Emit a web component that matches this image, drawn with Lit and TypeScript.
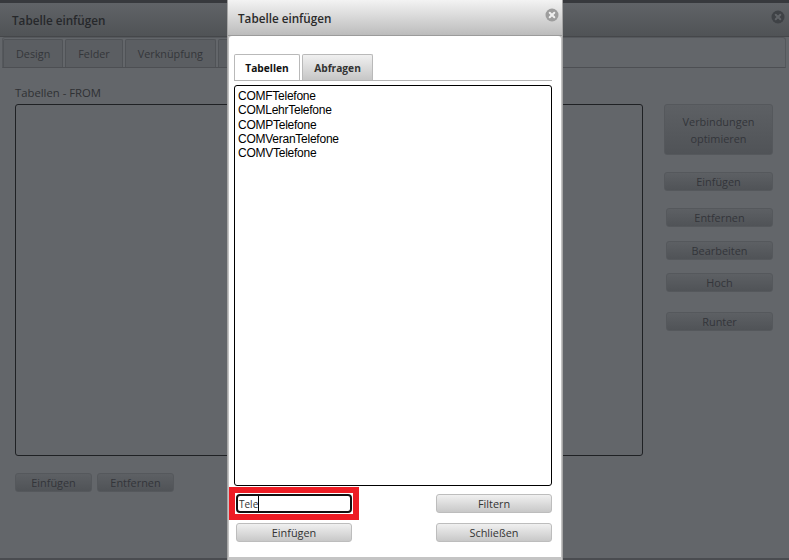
import { LitElement, html, css } from "lit";
import { customElement } from "lit/decorators.js";

const closeIcon = html`<svg class="x" width="14" height="14" viewBox="0 0 14 14"><circle cx="7" cy="7" r="6.5" fill="currentColor"/><path d="M4.7 4.7l4.6 4.6M9.3 4.7l-4.6 4.6" stroke="var(--x)" stroke-width="2" stroke-linecap="round"/></svg>`;

@customElement("app-root")
export class AppRoot extends LitElement {
  static styles = css`
    :host { display: block; width: 789px; height: 560px; position: relative; overflow: hidden; background: #63666a; font-family: "Open Sans", sans-serif; color: #2b2d30; }
    * { box-sizing: border-box; }
    .back { height: 560px; padding-top: 3px; background: #37393d; display: flex; flex-direction: column; }
    .back-head { height: 34px; flex: none; display: flex; align-items: flex-start; justify-content: space-between; padding: 9px 4px 0 12px; background: linear-gradient(#606367, #505356); border-bottom: 1px solid #45474a; font-size: 11.7px; font-weight: 600; color: #26282b; --x: #606367; }
    .back-head .x { color: #3f4246; margin-top: -2px; }
    .back-body { flex: 1; background: #63666a; padding: 0 2px; display: flex; flex-direction: column; border-bottom: 2px solid #4a4c50; }
    .back-tabs { height: 31px; flex: none; padding: 1px 0 0 0; display: flex; gap: 2px; border: 1px solid #55585c; border-radius: 3px 3px 0 0; border-bottom-color: #4d4f53; margin-right: 1px; }
    .back-tab { height: 28px; padding: 0 12px; display: flex; align-items: center; background: #5b5e62; border: 1px solid #505357; border-bottom: 0; border-radius: 2px 2px 0 0; font-size: 10.8px; color: #34363a; }
    .back-tab.rest { width: 40px; }
    .back-content { flex: 1; display: flex; padding: 17px 14px 0 13px; color: #2f3134; }
    .left { width: 628px; flex: none; }
    .from { font-size: 11.3px; line-height: 16px; height: 19px; }
    .frame { height: 352px; border: 1px solid #1f2124; border-radius: 3px; }
    .left-btns { display: flex; gap: 5px; margin-top: 17px; }
    .left-btns .dbtn { width: 77px; height: 19px; }
    .right { margin-left: 21px; width: 110px; padding-top: 19px; display: flex; flex-direction: column; align-items: stretch; }
    .dbtn { display: flex; align-items: center; justify-content: center; text-align: center; height: 19px; background: linear-gradient(#5d6064, #505357); border: 1px solid #55585c; border-radius: 3px; font-size: 10.9px; color: #33353a; }
    .dbtn.big { height: 51px; line-height: 17px; margin-bottom: 17px; }
    .dbtn.ein { margin-bottom: 17px; }
    .dbtn.s { margin-left: 2px; margin-bottom: 14px; }
    .dbtn.bear { margin-bottom: 13px; }
    .dbtn.hoch { margin-bottom: 20px; }
    .modal { position: absolute; left: 227px; top: 0; width: 336px; height: 560px; background: #c4c4c4; border-left: 1px solid #a6a6a6; border-right: 1px solid #a6a6a6; display: flex; flex-direction: column; padding-bottom: 3px; }
    .m-head { height: 36px; flex: none; display: flex; justify-content: space-between; padding: 10px 3px 0 10px; background: linear-gradient(#f3f3f3, #bcbcbc); border-bottom: 1px solid #9b9b9b; font-size: 11.7px; font-weight: 600; color: #2a2a2a; --x: #eee; }
    .m-head .x { color: #9d9d9d; margin-top: -2px; }
    .m-body { flex: 1; background: #fff; border-radius: 3px 3px 0 0; margin: 0 1px; padding: 18px 9px 0 5px; display: flex; flex-direction: column; }
    .tabs { height: 27px; flex: none; display: flex; gap: 2px; border-bottom: 1px solid #b5b5b5; }
    .tab { height: 26px; display: flex; align-items: center; justify-content: center; border: 1px solid #b9b9b9; border-bottom: 0; border-radius: 2px 2px 0 0; font-size: 10.2px; font-weight: 700; color: #111; }
    .tab.on { width: 66px; background: #fff; }
    .tab.off { width: 71px; background: linear-gradient(#f0f0f0, #c6c6c6); color: #333; }
    .list { height: 401px; margin-top: 4px; flex: none; border: 1px solid #000; border-radius: 3px; padding: 3px 3px; font: 12px/14.3px "Liberation Sans", Arial, sans-serif; letter-spacing: -0.25px; color: #000; background: #fff; }
    .row { display: flex; justify-content: space-between; align-items: center; padding: 0 0 0 2px; }
    .r1 { height: 19px; margin-top: 8px; }
    .r2 { height: 19px; margin-top: 10px; }
    .hl { position: absolute; left: 1px; top: 487px; width: 130px; height: 33px; border: 6px solid #ed1c24; }
    .input { height: 19px; width: 116px; border: 2px solid #111; border-radius: 4px; background: #fff; display: flex; align-items: center; font-size: 10px; color: #333; padding-left: 1px; }
    .caret { width: 1px; height: 15px; background: #000; }
    .btn { width: 116px; height: 19px; display: flex; align-items: center; justify-content: center; background: linear-gradient(#f0f0f0, #c8c8c8); border: 1px solid #bdbdbd; border-radius: 3px; font-size: 10.9px; color: #333; }
  `;

  render() {
    return html`
      <div class="back">
        <div class="back-head"><span>Tabelle einfügen</span>${closeIcon}</div>
        <div class="back-body">
          <div class="back-tabs">
            <div class="back-tab">Design</div>
            <div class="back-tab">Felder</div>
            <div class="back-tab">Verknüpfung</div>
            <div class="back-tab rest"></div>
          </div>
          <div class="back-content">
            <div class="left">
              <div class="from">Tabellen - FROM</div>
              <div class="frame"></div>
              <div class="left-btns"><div class="dbtn">Einfügen</div><div class="dbtn">Entfernen</div></div>
            </div>
            <div class="right">
              <div class="dbtn big">Verbindungen<br />optimieren</div>
              <div class="dbtn ein">Einfügen</div>
              <div class="dbtn s">Entfernen</div>
              <div class="dbtn s bear">Bearbeiten</div>
              <div class="dbtn s hoch">Hoch</div>
              <div class="dbtn s">Runter</div>
            </div>
          </div>
        </div>
      </div>
      <div class="modal">
        <div class="m-head"><span>Tabelle einfügen</span>${closeIcon}</div>
        <div class="m-body">
          <div class="tabs"><div class="tab on">Tabellen</div><div class="tab off">Abfragen</div></div>
          <div class="list">
            <div>COMFTelefone</div>
            <div>COMLehrTelefone</div>
            <div>COMPTelefone</div>
            <div>COMVeranTelefone</div>
            <div>COMVTelefone</div>
          </div>
          <div class="row r1">
            <div class="input">Tele<span class="caret"></span></div>
            <div class="btn">Filtern</div>
          </div>
          <div class="row r2"><div class="btn">Einfügen</div><div class="btn">Schließen</div></div>
        </div>
        <div class="hl"></div>
      </div>
    `;
  }
}
